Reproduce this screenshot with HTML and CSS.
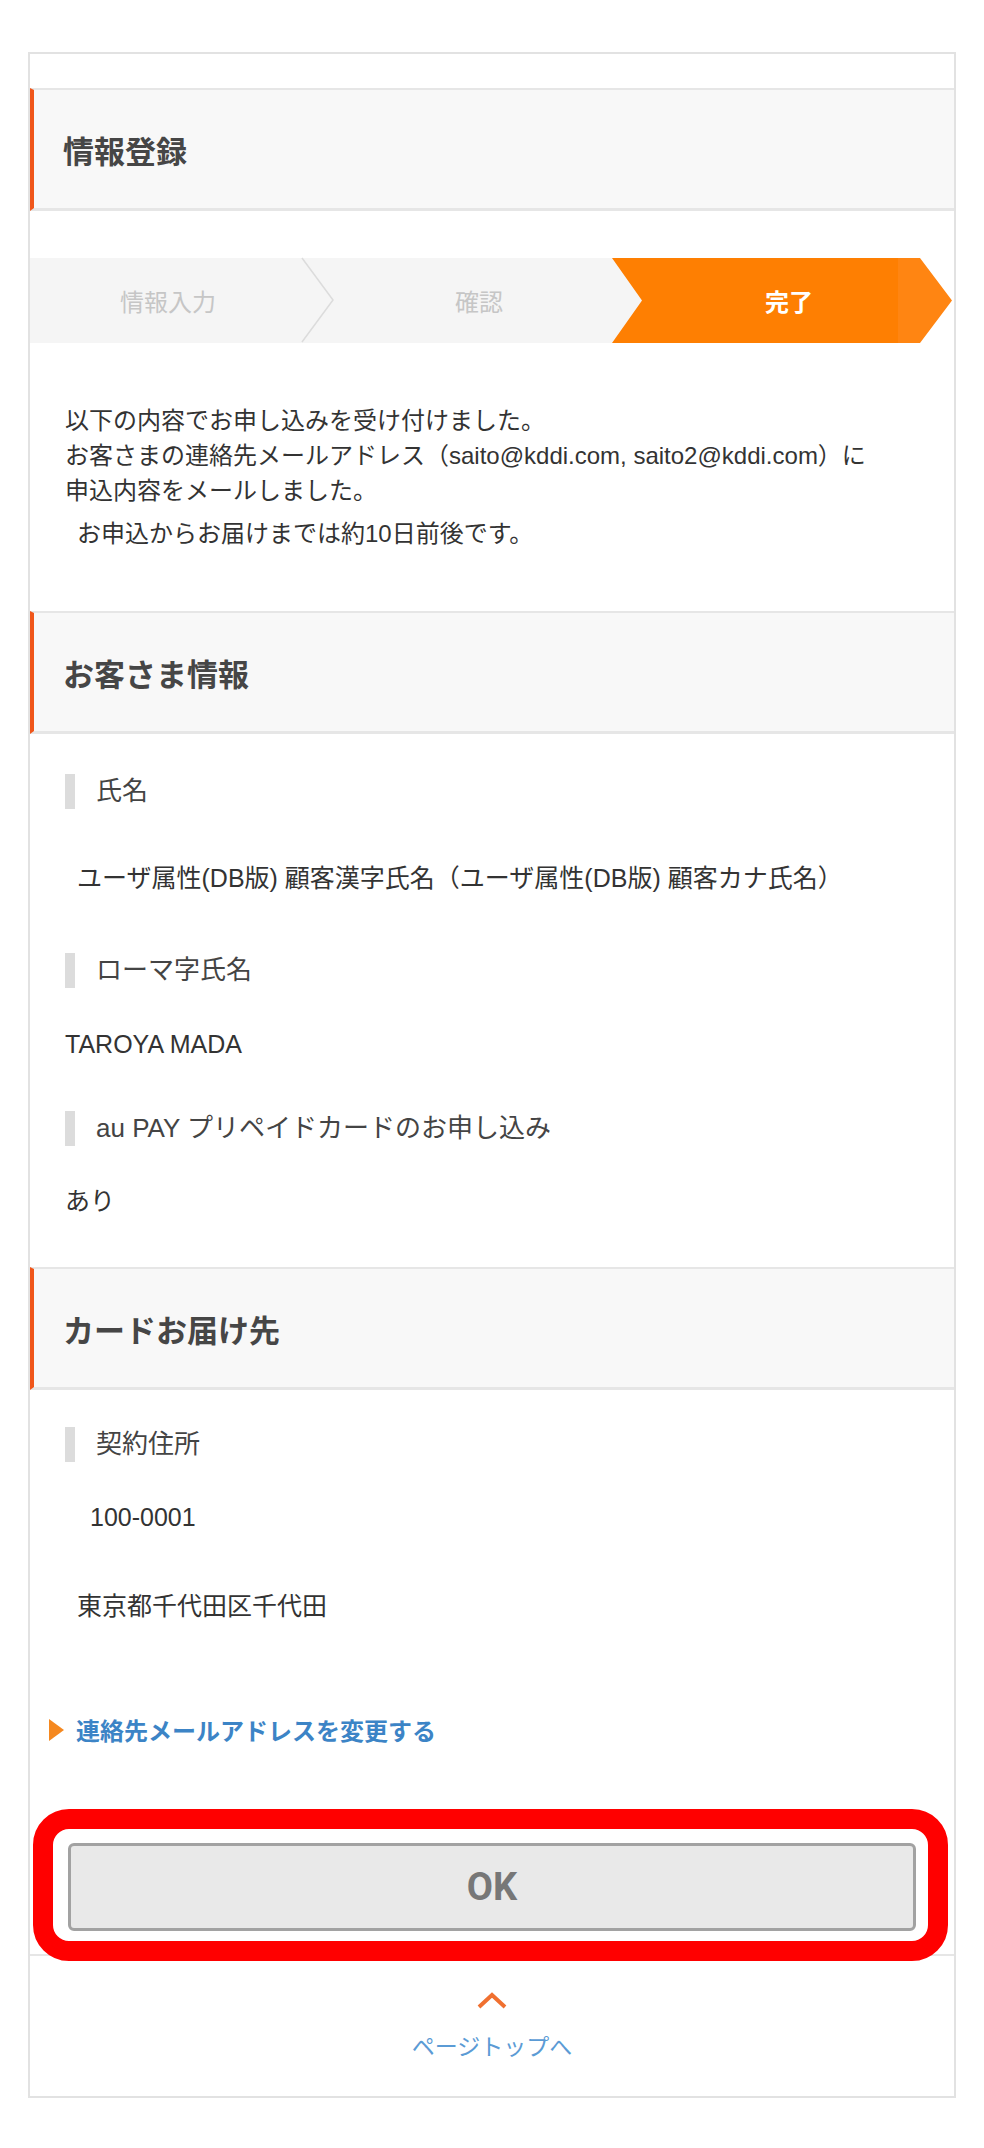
FILE: index.html
```html
<!DOCTYPE html>
<html lang="ja">
<head>
<meta charset="utf-8">
<title>情報登録</title>
<link rel="stylesheet" href="styles.css">
</head>
<body>
<div class="frame">
  <div class="sec-head first">情報登録</div>

  <div class="steps">
    <div class="step step-1">
      <span>情報入力</span>
      <svg class="chev" width="36" height="84" viewBox="0 0 36 84"><polyline points="2,0 33,42 2,84" fill="none" stroke="#dcdcdc" stroke-width="1.5"/></svg>
    </div>
    <div class="step step-2"><span>確認</span></div>
    <div class="step step-3"><span>完了</span></div>
  </div>

  <div class="notice">
    <p class="notice-main">以下の内容でお申し込みを受け付けました。<br>お客さまの連絡先メールアドレス（saito@kddi.com, saito2@kddi.com）に<br>申込内容をメールしました。</p>
    <p class="notice-sub">お申込からお届けまでは約10日前後です。</p>
  </div>

  <div class="sec-head">お客さま情報</div>
  <div class="sec-body">
    <div class="label l1">氏名</div>
    <div class="value v1 indent">ユーザ属性(DB版) 顧客漢字氏名（ユーザ属性(DB版) 顧客カナ氏名）</div>
    <div class="label l2">ローマ字氏名</div>
    <div class="value v2">TAROYA MADA</div>
    <div class="label l3">au PAY プリペイドカードのお申し込み</div>
    <div class="value v3">あり</div>
  </div>

  <div class="sec-head">カードお届け先</div>
  <div class="sec-body">
    <div class="label l4">契約住所</div>
    <div class="value v4">100-0001</div>
    <div class="value v5 indent">東京都千代田区千代田</div>
    <a class="link" href="#"><svg class="tri" width="15" height="22" viewBox="0 0 15 22"><polygon points="0,0 15,11 0,22" fill="#f5881f"/></svg><span>連絡先メールアドレスを変更する</span></a>
  </div>

  <div class="highlight">
    <button class="ok-btn" type="button">OK</button>
  </div>

  <div class="pagetop">
    <svg class="up" width="30" height="17" viewBox="0 0 30 17"><polyline points="2,15 15,3 28,15" fill="none" stroke="#f07030" stroke-width="4"/></svg>
    <a class="pagetop-link" href="#">ページトップへ</a>
  </div>
</div>
</body>
</html>
```

FILE: styles.css
```css
html, body {
  margin: 0;
  padding: 0;
  background: #fff;
}

body {
  font-family: "Liberation Sans", "Noto Sans CJK JP", sans-serif;
  color: #333;
}

.frame {
  box-sizing: border-box;
  width: 928px;
  margin: 52px 0 0 28px;
  border: 2px solid #e2e2e2;
}

.sec-head {
  box-sizing: border-box;
  height: 123px;
  display: flex;
  align-items: center;
  padding-left: 29px;
  background: #f8f8f8;
  border-top: 2px solid #e6e6e6;
  border-bottom: 3px solid #e6e6e6;
  border-left: 4px solid #f0561a;
  font-size: 31px;
  font-weight: bold;
  color: #464646;
}

.sec-head.first {
  margin-top: 34px;
}

/* steps */
.steps {
  display: flex;
  height: 85px;
  margin-top: 47px;
  background: linear-gradient(to right, #f5f5f5 612px, #fff 612px);
}

.step {
  position: relative;
  box-sizing: border-box;
  display: flex;
  align-items: center;
  justify-content: center;
  font-size: 24px;
  color: #c6c6c6;
}

.step-1 {
  flex: 0 0 300px;
  padding-right: 24px;
}

.step-2 {
  flex: 0 0 282px;
  padding-left: 16px;
}

.step-3 {
  flex: 0 0 340px;
  padding-left: 14px;
  color: #fff;
  font-weight: bold;
  background: linear-gradient(to right, #fe7f02 286px, #ff8512 286px);
  clip-path: polygon(0 0, 308px 0, 340px 50%, 308px 100%, 0 100%, 30px 50%);
}

.chev {
  position: absolute;
  left: 270px;
  top: 0;
  overflow: visible;
}

/* notice */
.notice {
  padding: 0 20px 0 35px;
  margin-top: 60px;
}

.notice p {
  margin: 0;
  font-size: 24px;
  line-height: 35px;
  color: #333;
}

.notice .notice-sub {
  margin-top: 8px;
  padding-left: 12px;
  margin-bottom: 60px;
}

/* section body */
.sec-body {
  padding: 0 20px 0 35px;
}

.label {
  box-sizing: border-box;
  height: 35px;
  line-height: 35px;
  border-left: 10px solid #dcdcdc;
  padding-left: 21px;
  font-size: 26px;
  color: #444;
}

.value {
  line-height: 35px;
  font-size: 25px;
  color: #333;
}

.value.indent {
  padding-left: 12px;
}

.l1 { margin-top: 40px; }
.v1 { margin-top: 52px; }
.l2 { margin-top: 57px; }
.v2 { margin-top: 39px; }
.l3 { margin-top: 49px; }
.v3 { margin-top: 38px; margin-bottom: 48px; }

.l4 { margin-top: 37px; }
.v4 { margin-top: 38px; padding-left: 25px; }
.v5 { margin-top: 54px; }

.link {
  display: flex;
  align-items: center;
  margin-top: 88px;
  margin-left: -16px;
  height: 35px;
  text-decoration: none;
  color: #3c84c6;
  font-size: 24px;
  font-weight: bold;
}

.link .tri {
  margin-right: 12px;
}

/* highlighted OK area */
.highlight {
  position: relative;
  z-index: 1;
  margin: 62px 6px -7px 3px;
  border: 20px solid #ff0000;
  border-radius: 36px;
  background: #fff;
  padding: 14px 12px 10px 15px;
}

.ok-btn {
  display: block;
  box-sizing: border-box;
  width: 100%;
  height: 88px;
  margin: 0;
  background: #e9e9e9;
  border: 3px solid #a2a2a2;
  border-radius: 6px;
  font-family: Roboto, "Liberation Sans", sans-serif;
  font-weight: bold;
  font-size: 38px;
  color: #777;
  cursor: pointer;
}

/* page top */
.pagetop {
  border-top: 2px solid #e6e6e6;
  display: flex;
  flex-direction: column;
  align-items: center;
  padding-top: 36px;
  padding-bottom: 34px;
}

.up {
  display: block;
}

.pagetop-link {
  margin-top: 23px;
  line-height: 30px;
  font-size: 23px;
  color: #5b9bd5;
  text-decoration: none;
}
```
